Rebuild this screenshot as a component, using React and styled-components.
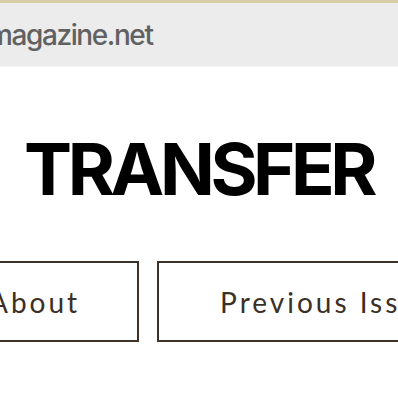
import React from "react";
import styled, { createGlobalStyle } from "styled-components";

const Global = createGlobalStyle`
  html, body { margin: 0; padding: 0; background: #ffffff; overflow: hidden; }
  #root { width: 398px; height: 397px; overflow: hidden; }
`;

const Page = styled.div`
  width: 398px;
  height: 397px;
  overflow: hidden;
  display: flex;
  flex-direction: column;
  background: #ffffff;
`;

const AddressBar = styled.div`
  border-top: 3px solid #d6cda8;
  background: #ececec;
  height: 63px;
  display: flex;
  align-items: center;
  border-bottom: 1px solid #f4f4f4;
`;

const UrlText = styled.span`
  margin-left: -12px;
  font-family: Inter, "Liberation Sans", Arial, sans-serif;
  font-weight: 500;
  font-size: 28px;
  letter-spacing: -1.4px;
  color: #616161;
  white-space: nowrap;
`;

const Title = styled.h1`
  margin: 66px 0 0 24px;
  font-family: Inter, "Liberation Sans", sans-serif;
  font-weight: 700;
  font-size: 72px;
  line-height: 1;
  letter-spacing: -4.4px;
  word-spacing: 9px;
  color: #000000;
  white-space: nowrap;
`;

const Nav = styled.nav`
  display: flex;
  gap: 18px;
  margin: 56px 0 0 -74px;
`;

const NavButton = styled.a`
  flex: none;
  box-sizing: border-box;
  height: 81px;
  display: flex;
  align-items: center;
  padding: 0 57px 0 61px;
  border: 2px solid #3e3128;
  font-family: Lato, "Open Sans", sans-serif;
  font-weight: 400;
  font-size: 28px;
  letter-spacing: 3px;
  color: #3b2f26;
  white-space: nowrap;
  text-decoration: none;
`;

export default function App() {
  return (
    <Page>
      <Global />
      <AddressBar>
        <UrlText>magazine.net</UrlText>
      </AddressBar>
      <Title>TRANSFER MAGAZINE</Title>
      <Nav>
        <NavButton>About</NavButton>
        <NavButton>Previous Issues</NavButton>
      </Nav>
    </Page>
  );
}
